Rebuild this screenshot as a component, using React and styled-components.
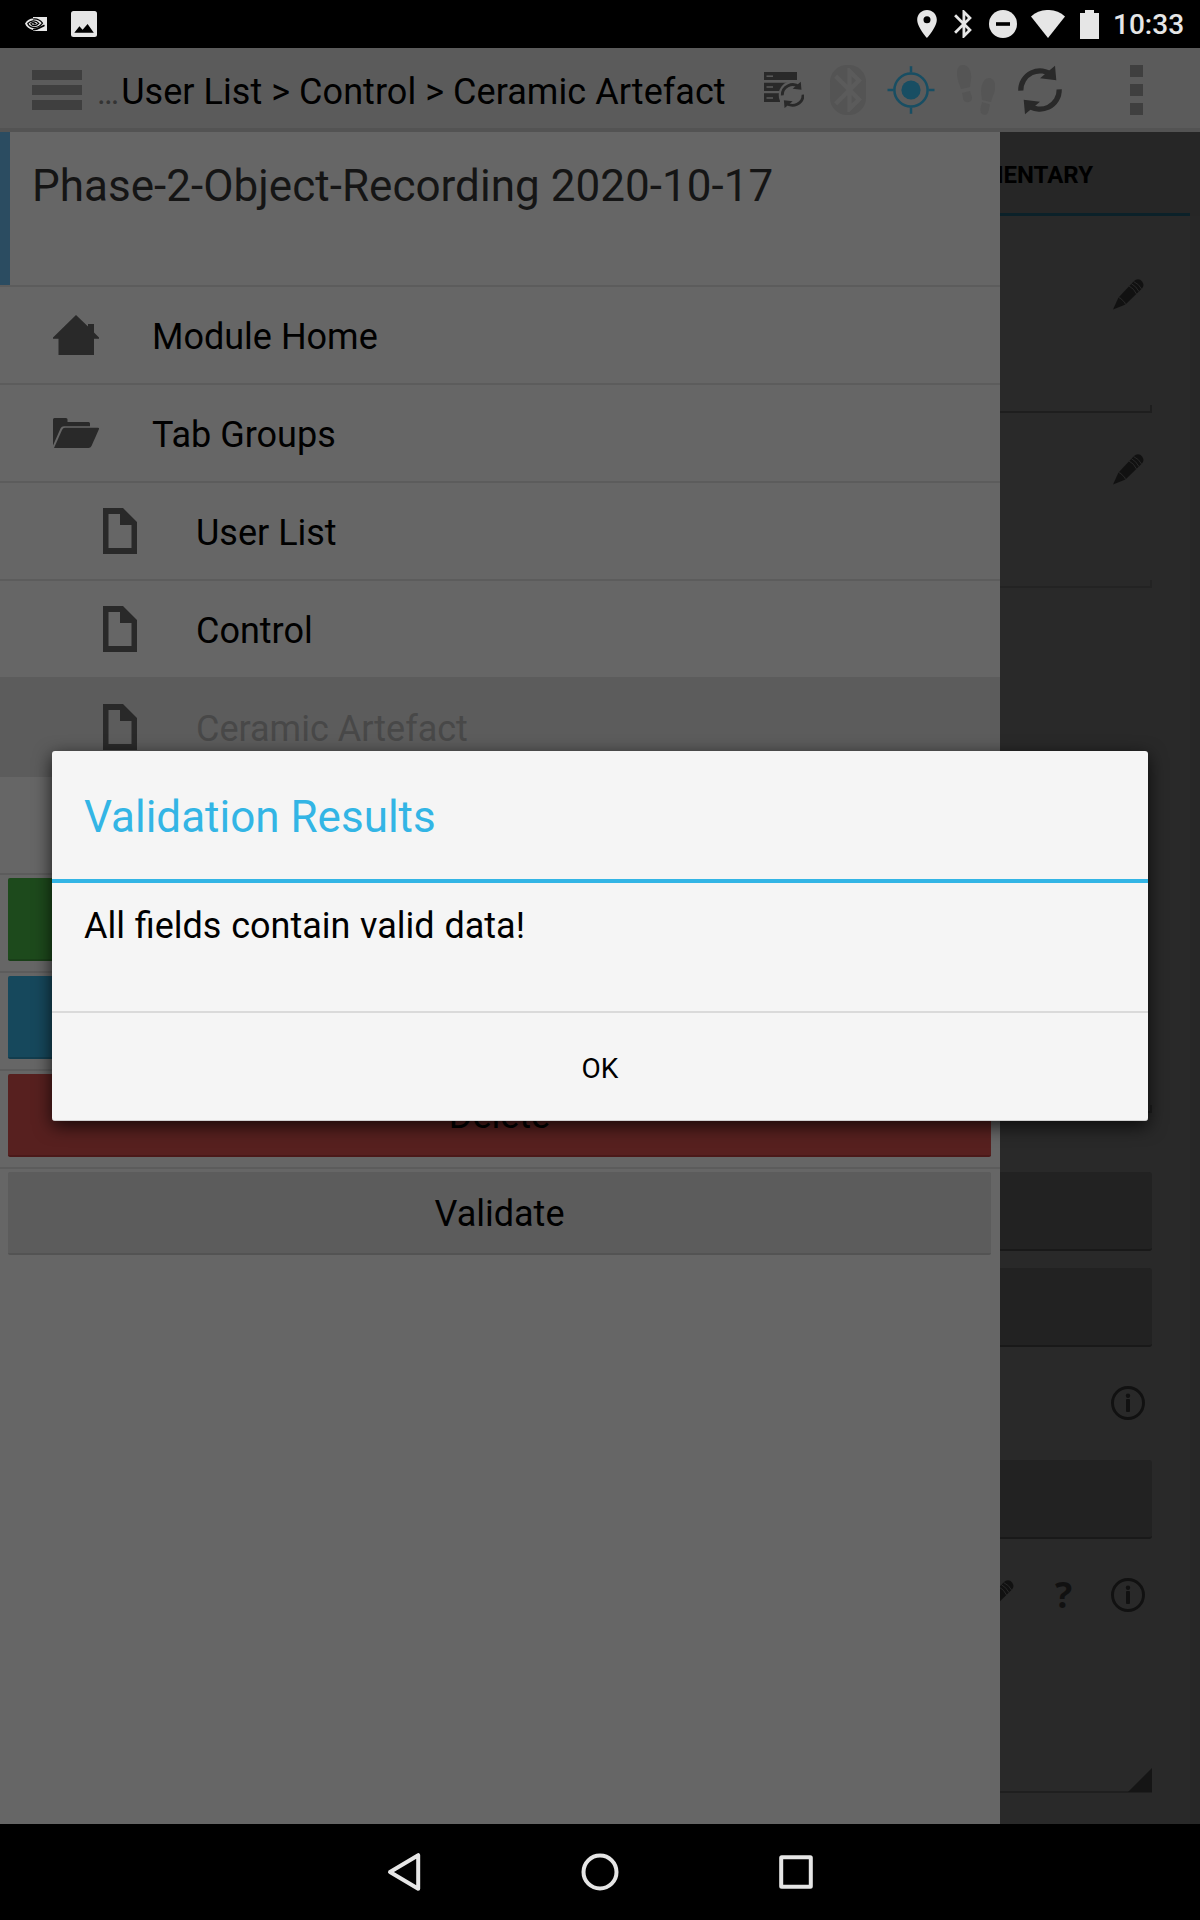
import React from "react";
import styled, { createGlobalStyle } from "styled-components";

const c = {
  bar: "#5b5b5b",
  drawer: "#666666",
  line: "#5c5c5c",
  icon: "#292929",
  page: "#292929",
  field: "#222222",
  ink: "#111111",
  status: "#e6e6e6",
};

const Global = createGlobalStyle`
  * { box-sizing: border-box; }
  body { margin: 0; background: #000; font-family: Roboto, "Liberation Sans", sans-serif; }
  svg { display: block; flex: none; }
`;

const Screen = styled.div`
  position: relative;
  width: 1200px;
  height: 1920px;
  overflow: hidden;
  display: flex;
  flex-direction: column;
  background: #000;
  color: #000;
`;

const StatusBar = styled.header`
  height: 48px;
  flex: none;
  display: flex;
  justify-content: space-between;
  padding: 0 16px 0 25px;
  background: #000;
  color: ${c.status};
`;

const StatusGroup = styled.div`
  display: flex;
  align-items: center;
  gap: ${(p) => p.$gap}px;
`;

const StatusSlot = styled.span`
  padding-right: ${(p) => p.$after}px;
`;

const Clock = styled.span`
  width: 71px;
  font-size: 28px;
  font-weight: 500;
  line-height: 48px;
  padding-top: 2px;
  white-space: nowrap;
`;

const ActionBar = styled.div`
  height: 84px;
  flex: none;
  display: flex;
  align-items: center;
  padding: 0 57px 0 32px;
  background: ${c.bar};
  border-bottom: 4px solid #535353;
`;

const MenuIcon = styled.div`
  width: 50px;
  height: 40px;
  margin-top: 4px;
  border: solid #3f3f3f;
  border-width: 10px 0;
  padding: 5px 0;
  &::before {
    content: "";
    display: block;
    height: 10px;
    background: #3f3f3f;
  }
`;

const Breadcrumb = styled.div`
  flex: 1;
  padding: 8px 0 0 15px;
  font-size: 36px;
  line-height: 44px;
  letter-spacing: 0.05px;
  white-space: nowrap;
`;

const Ellipsis = styled.span`
  display: inline-block;
  width: 24.2px;
  color: #343434;
  font-size: 33px;
`;

const Tools = styled.div`
  display: flex;
  align-items: center;
  gap: 21.3px;
  padding-top: 4px;
`;

const SyncSlot = styled.div`
  padding-right: 4.4px;
`;

const Overflow = styled.div`
  display: flex;
  flex-direction: column;
  gap: 6.5px;
  margin-left: 44.7px;
`;

const Dot = styled.i`
  width: 13px;
  height: 12.4px;
  background: #3f3f3f;
`;

const Body = styled.main`
  height: 1692px;
  flex: none;
  display: flex;
`;

const Drawer = styled.nav`
  width: 1000px;
  background: ${c.drawer};
`;

const ModuleTitle = styled.div`
  height: 153px;
  border-left: 10px solid #2b4c61;
  padding: 28px 0 0 22px;
  font-size: 44px;
  line-height: 52px;
  letter-spacing: 0.03px;
  color: #151515;
`;

const Row = styled.div`
  height: 98px;
  display: flex;
  align-items: center;
  border-top: 2px solid ${c.line};
  padding-left: ${(p) => (p.$nested ? 103 : 53)}px;
  background: ${(p) => (p.$selected ? c.line : "transparent")};
  color: ${(p) => (p.$selected ? "#484848" : "#000")};
  font-size: 36px;
  line-height: 42px;
`;

const RowLabel = styled.span`
  padding: 3px 0 0 ${(p) => (p.$nested ? 59 : 53)}px;
`;

const Blank = styled.div`
  height: 98px;
  border-top: 2px solid ${c.line};
`;

const ActionRow = styled.div`
  height: 98px;
  border-top: 2px solid ${c.line};
  padding: 3px 9px 0 8px;
`;

const ActionButton = styled.div`
  height: 83px;
  border-radius: 2px;
  border-bottom: 2px solid ${(p) => p.$edge};
  background: ${(p) => p.$fill};
  font-size: 36px;
  line-height: 84px;
  text-align: center;
`;

const Page = styled.section`
  width: 200px;
  overflow: hidden;
  display: flex;
  flex-direction: column;
  padding-right: 10px;
  background: #272727;
`;

const Tab = styled.div`
  height: 84px;
  flex: none;
  display: flex;
  justify-content: flex-end;
  padding: 27px 107px 0 0;
  margin-right: -10px;
  background: linear-gradient(#0b2129, #0b2129) left bottom / 190px 3px no-repeat #262626;
  font-size: 24px;
  font-weight: 700;
  line-height: 32px;
`;

const Form = styled.div`
  flex: 1;
  padding-right: 38px;
  background: ${c.page};
`;

const Field = styled.div`
  height: ${(p) => p.$h}px;
  display: flex;
  flex-direction: column;
  align-items: flex-end;
  justify-content: space-between;
  padding-top: ${(p) => p.$top || 0}px;
`;

const Underline = styled.div`
  width: 152px;
  height: 8px;
  margin-top: auto;
  border: solid ${(p) => p.$color};
  border-width: 0 2px 2px 0;
`;

const IconSlot = styled.div`
  padding-right: 8px;
`;

const Input = styled.div`
  height: 79px;
  margin-top: ${(p) => p.$top}px;
  border-radius: 0 3px 3px 0;
  border-bottom: 2px solid #191919;
  background: ${c.field};
`;

const IconRow = styled.div`
  display: flex;
  justify-content: flex-end;
  align-items: center;
  height: 34px;
  margin-top: 39px;
  padding-right: 7px;
  margin-left: -20px;
`;

const Question = styled.b`
  width: 18px;
  margin: 0 38px 0 41px;
  color: ${c.ink};
  font: 700 36px/34px "Open Sans", sans-serif;
`;

const Spinner = styled.div`
  height: 181px;
  border-bottom: 2px solid #1f1f1f;
  display: flex;
  justify-content: flex-end;
  align-items: flex-end;
`;

const Corner = styled.i`
  width: 24px;
  height: 24px;
  margin-bottom: -1px;
  background: #151515;
  clip-path: polygon(100% 0, 100% 100%, 0 100%);
`;

const Dialog = styled.div`
  position: absolute;
  left: 52px;
  top: 751px;
  width: 1096px;
  height: 370px;
  border-radius: 3px;
  border-bottom: 1px solid #d0d0d0;
  background: #f5f5f5;
  box-shadow: 0 5px 18px rgba(0, 0, 0, 0.75);
`;

const DialogTitle = styled.div`
  height: 132px;
  border-bottom: 4px solid #33b5e5;
  padding: 0 32px;
  color: #33b5e5;
  font-size: 44px;
  line-height: 132px;
`;

const Message = styled.div`
  height: 130px;
  border-bottom: 2px solid #dadada;
  padding: 21px 32px;
  font-size: 36px;
  line-height: 44px;
  word-spacing: 0.8px;
`;

const Ok = styled.div`
  text-align: center;
  font-size: 28px;
  line-height: 112px;
  height: 107px;
`;

const NavBar = styled.footer`
  height: 96px;
  flex: none;
  display: flex;
  justify-content: center;
  align-items: center;
  gap: 156px;
`;

const Eye = () => (
  <svg width="22" height="14" viewBox="0 0 22 14">
    <path d="M8 0H22V14H8V13C4 12 1 9.500 0 6.500C2 3 5 1.700 8 1.500Z" fill={c.status} />
    <g fill="none" stroke="#000" strokeWidth="1.200">
      <path d="M8 2C12 1.500 15.500 3.500 17.500 6.200C15 9.500 11.500 11 8 10.500C5.500 10 3.500 8.500 2.800 6.500C4.500 4.500 6 4 8 3.800C10.500 3.600 12.500 4.800 13.800 6.400C12 8.500 10 9 8 8.600C6.800 8 6 7.200 5.800 6.600C7 5.400 9 5.300 10.500 6.600L8.500 7.200" />
      <path d="M8 12.600C12 13 15 10.500 19.500 8.200" strokeWidth="1.800" />
    </g>
  </svg>
);

const Picture = () => (
  <svg width="26" height="26" viewBox="0 0 26 26">
    <rect width="26" height="26" rx="2.500" fill={c.status} />
    <path d="M3.300 21.700L8.400 15.300L11.600 18.800L16.600 13L22.800 21.700Z" fill="#000" />
  </svg>
);

const Pin = () => (
  <svg width="20" height="28" viewBox="5 2 14 20">
    <path fill={c.status} fillRule="evenodd" d="M12 2C8.100 2 5 5.100 5 9c0 5.300 7 13 7 13s7-7.700 7-13c0-3.900-3.100-7-7-7zm0 9.500a2.500 2.500 0 1 1 0-5 2.500 2.500 0 0 1 0 5z" />
  </svg>
);

const RUNE =
  "M17.71 7.710L12 2h-1v7.590L6.410 5 5 6.410 10.590 12 5 17.590 6.410 19 11 14.410V22h1l5.710-5.710-4.300-4.290 4.300-4.290zM13 5.830l1.880 1.880L13 9.590V5.830zm1.880 10.460L13 18.170v-3.760l1.880 1.880z";

const StatusBluetooth = () => (
  <svg width="18" height="28" viewBox="5 2 12.710 20">
    <path fill={c.status} d={RUNE} />
  </svg>
);

const DoNotDisturb = () => (
  <svg width="28" height="28" viewBox="0 0 28 28">
    <circle cx="14" cy="14" r="14" fill={c.status} />
    <rect x="7" y="12.200" width="14" height="3.600" fill="#000" />
  </svg>
);

const Wifi = () => (
  <svg width="34" height="28" viewBox="0 0 34 28">
    <path d="M17 28L0 6.500C9-2.200 25-2.200 34 6.500Z" fill={c.status} />
  </svg>
);

const Battery = () => (
  <svg width="19" height="29" viewBox="0 0 19 29">
    <path d="M5 0H14V3H19V29H0V3H5Z" fill={c.status} />
  </svg>
);

const SyncShape = () => (
  <g fill={c.icon}>
    <path d="M4.800 24.700A19.200 19.200 0 0 1 36.500 9.500M43.200 23.300A19.200 19.200 0 0 1 11.500 38.500" fill="none" stroke={c.icon} strokeWidth="5.200" />
    <path d="M39 -0.300L40.300 14.300L24 12.300ZM9 48.300L7.700 33.700L24 35.700Z" />
  </g>
);

const ServerSync = () => (
  <svg width="40" height="36" viewBox="0 0 40 36">
    <path d="M0 10.700H23V19H0ZM0 21.300H16V30H0Z" fill={c.icon} />
    <path d="M2.500 15H9M2.500 26H9" stroke={c.bar} strokeWidth="1.500" />
    <circle cx="28.700" cy="23" r="14" fill={c.bar} />
    <path d="M0 0H33V8H0Z" fill={c.icon} />
    <path d="M2.500 4.200H9" stroke={c.bar} strokeWidth="1.500" />
    <g transform="translate(15.700 10) scale(.54)">
      <SyncShape />
    </g>
  </svg>
);

const BluetoothBadge = () => (
  <svg width="36" height="50" viewBox="0 0 36 50">
    <rect width="36" height="50" rx="17" fill="#545454" />
    <path transform="translate(-6.900 -1.400) scale(2.200)" fill={c.bar} d={RUNE} />
  </svg>
);

const Gps = () => (
  <svg width="48" height="48" viewBox="0 0 48 48">
    <circle cx="24" cy="24" r="9.600" fill="#184e63" />
    <g fill="none" stroke="#184e63" strokeWidth="2.500">
      <circle cx="24" cy="24" r="16.600" />
      <path d="M24 0.300V6.500M24 41.500V47.700M0.500 24H6.500M41.500 24H47.500" />
    </g>
  </svg>
);

const Footprints = () => (
  <svg width="38" height="50" viewBox="0 0 38 50">
    <g fill="#555555">
      <path d="M6 0C12 0 15 8 14 14C13.500 18 13 20 13 22L4 24C3 20 0 15 0 8C0 3 2 0 6 0Z" />
      <path d="M5 28L13 26C14 30 16 32 14.500 35C13 38 8 38 6.500 35C5.500 32 6 31 5 28Z" />
      <path d="M32 13C36 13 38.500 17 38.200 22C38 28 35 32 34 37L25 35C25 31 23.500 28 24.500 22C25.500 17 28 13 32 13Z" />
      <path d="M25 37L33 39.500C32 43 32 46 30.500 48.500C28.500 51 24 50 23.500 46C23 43 24.500 40 25 37Z" />
    </g>
  </svg>
);

const Refresh = () => (
  <svg width="48" height="48" viewBox="0 0 48 48" overflow="visible">
    <SyncShape />
  </svg>
);

const Home = () => (
  <svg width="46" height="40" viewBox="0 0 46 40">
    <path fill={c.icon} d="M23 0L35 11.500V9H41V17.500L46 22.500V23.700H41V40H5.500V23.700H0V22.500Z" />
  </svg>
);

const Folder = () => (
  <svg width="46" height="30" viewBox="0 0 46 30">
    <path fill={c.icon} d="M0 1.500Q0 0 1.500 0H13Q14.500 0 14.500 1.500V4H35.500Q37 4 37 5.500V8.200H11Q8.500 8.200 7.500 10.500L0 27.500Z" />
    <path fill={c.icon} d="M1 30L9 12Q10 9.800 12 9.800H45Q46.500 9.800 45.800 11.500L38.500 28Q37.500 30 35.500 30Z" />
  </svg>
);

const Doc = () => (
  <svg width="34" height="46" viewBox="0 0 34 46">
    <path fill={c.icon} fillRule="evenodd" d="M0 0H20L34 14V46H0ZM5.500 6V40H28.500V17H17V6Z" />
  </svg>
);

const Pencil = () => (
  <svg width="31" height="31" viewBox="0 0 31 31">
    <path fill={c.ink} d="M0 30.500L5.500 18.500L20.500 2.500C24-1 27 0 29 2.500C31 5 31 7.500 28.500 10L12.500 25.500Z" />
    <g fill="none" stroke={c.page} strokeWidth="1">
      <path d="M5.500 18.500Q8.500 19 9.500 21.500Q12 22.500 12.500 25.500" />
      <path d="M16 7Q21 9.500 23.500 15M18.300 4.600Q23.500 7.500 26 12.600M20.500 2.500Q26 5 28.500 10" />
    </g>
  </svg>
);

const Info = () => (
  <svg width="34" height="34" viewBox="0 0 34 34">
    <circle cx="17" cy="17" r="15.500" fill="none" stroke={c.ink} strokeWidth="2.900" />
    <circle cx="17" cy="9.800" r="2.200" fill={c.ink} />
    <rect x="15" y="13" width="4" height="13" rx="1" fill={c.ink} />
  </svg>
);

const Back = () => (
  <svg width="40" height="40" viewBox="0 0 40 40">
    <path d="M34.200 3.200V36.800L6 20Z" fill="none" stroke={c.status} strokeWidth="4" strokeLinejoin="round" />
  </svg>
);

const HomeCircle = () => (
  <svg width="40" height="40" viewBox="0 0 40 40">
    <circle cx="20" cy="20" r="16.500" fill="none" stroke={c.status} strokeWidth="4" />
  </svg>
);

const Recents = () => (
  <svg width="40" height="40" viewBox="0 0 40 40">
    <rect x="5.200" y="5.200" width="29.600" height="29.600" rx="0.500" fill="none" stroke={c.status} strokeWidth="4" strokeLinejoin="round" />
  </svg>
);

const rows = [
  { label: "Module Home", Icon: Home },
  { label: "Tab Groups", Icon: Folder },
  { label: "User List", Icon: Doc, nested: true },
  { label: "Control", Icon: Doc, nested: true },
  { label: "Ceramic Artefact", Icon: Doc, nested: true, selected: true },
];

const actions = [
  { fill: "#1d4a1c", edge: "#193f18" },
  { fill: "#16485c", edge: "#123d4e" },
  { label: "Delete", fill: "#57201f", edge: "#4b1919" },
  { label: "Validate", fill: "#5c5c5c", edge: "#535353" },
];

export default function App() {
  return (
    <Screen>
      <Global />
      <StatusBar>
        <StatusGroup $gap={24}>
          <Eye />
          <Picture />
        </StatusGroup>
        <StatusGroup $gap={14}>
          <StatusSlot $after={3}><Pin /></StatusSlot>
          <StatusSlot $after={3}><StatusBluetooth /></StatusSlot>
          <DoNotDisturb />
          <StatusSlot $after={1}><Wifi /></StatusSlot>
          <Battery />
          <Clock>10:33</Clock>
        </StatusGroup>
      </StatusBar>
      <ActionBar>
        <MenuIcon />
        <Breadcrumb>
          <Ellipsis>…</Ellipsis>User List &gt; Control &gt; Ceramic Artefact
        </Breadcrumb>
        <Tools>
          <SyncSlot><ServerSync /></SyncSlot>
          <BluetoothBadge />
          <Gps />
          <Footprints />
          <Refresh />
          <Overflow>
            <Dot />
            <Dot />
            <Dot />
          </Overflow>
        </Tools>
      </ActionBar>
      <Body>
        <Drawer>
          <ModuleTitle>Phase-2-Object-Recording 2020-10-17</ModuleTitle>
          {rows.map(({ label, Icon, nested, selected }) => (
            <Row key={label} $nested={nested} $selected={selected}>
              <Icon />
              <RowLabel $nested={nested}>{label}</RowLabel>
            </Row>
          ))}
          <Blank />
          {actions.map((a) => (
            <ActionRow key={a.fill}>
              <ActionButton $fill={a.fill} $edge={a.edge}>
                {a.label}
              </ActionButton>
            </ActionRow>
          ))}
        </Drawer>
        <Page>
          <Tab>MENTARY</Tab>
          <Form>
            <Field $h={197} $top={63}>
              <IconSlot><Pencil /></IconSlot>
              <Underline $color="#1e1e1e" />
            </Field>
            <Field $h={175} $top={41}>
              <IconSlot><Pencil /></IconSlot>
              <Underline $color="#232323" />
            </Field>
            <Field $h={525}>
              <Underline $color="#1e1e1e" />
            </Field>
            <Input $top={59} />
            <Input $top={17} />
            <IconRow>
              <Info />
            </IconRow>
            <Input $top={40} />
            <IconRow>
              <Pencil />
              <Question>?</Question>
              <Info />
            </IconRow>
            <Spinner>
              <Corner />
            </Spinner>
          </Form>
        </Page>
      </Body>
      <NavBar>
        <Back />
        <HomeCircle />
        <Recents />
      </NavBar>
      <Dialog>
        <DialogTitle>Validation Results</DialogTitle>
        <Message>All fields contain valid data!</Message>
        <Ok>OK</Ok>
      </Dialog>
    </Screen>
  );
}
